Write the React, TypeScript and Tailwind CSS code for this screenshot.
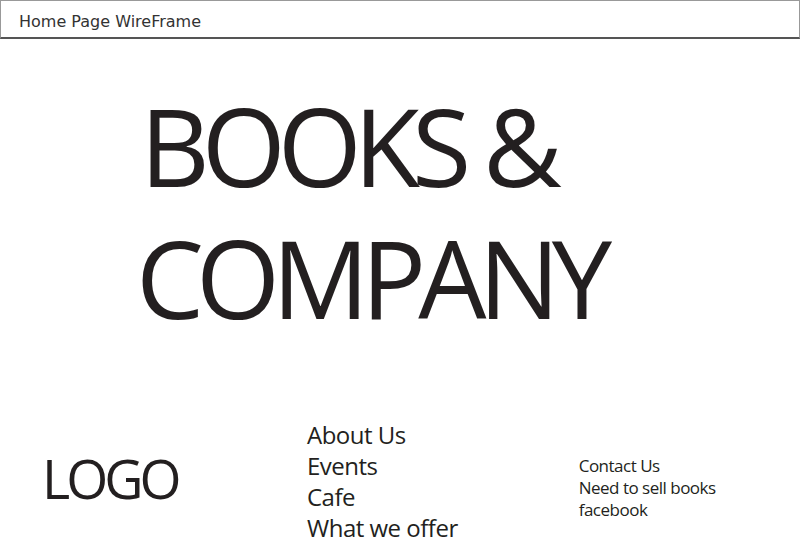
export default function App() {
  return (
    <div className="h-[550px] w-[800px] overflow-hidden bg-white text-[#231f20] [font-family:'Open_Sans',sans-serif]">
      <div className="flex h-[39px] items-center border border-[#999] border-b-2 border-b-[#555] pl-[18px] pt-[5px]">
        <span className="text-[16px] [font-family:'DejaVu_Sans',sans-serif] text-[#333]">Home Page WireFrame</span>
      </div>

      <div className="pl-[140px] pt-[41px]">
        <div className="text-[108px] leading-[132px] tracking-[-8px]">BOOKS &amp;</div>
        <div className="-ml-[4px] text-[108px] leading-[132px] tracking-[-8px]">COMPANY</div>
      </div>

      <div className="mt-[75px] flex items-start">
        <div className="ml-[42px] mt-[32px] w-[225px] text-[54px] tracking-[-4px] leading-none">LOGO</div>
        <div className="ml-[40px] flex flex-col text-[24px] leading-[31px] tracking-[-0.5px]">
          <span>About Us</span>
          <span>Events</span>
          <span>Cafe</span>
          <span>What we offer</span>
        </div>
        <div className="ml-[121px] mt-[36px] flex flex-col text-[17px] leading-[22px] tracking-[-0.5px]">
          <span>Contact Us</span>
          <span>Need to sell books</span>
          <span>facebook</span>
        </div>
      </div>
    </div>
  );
}
